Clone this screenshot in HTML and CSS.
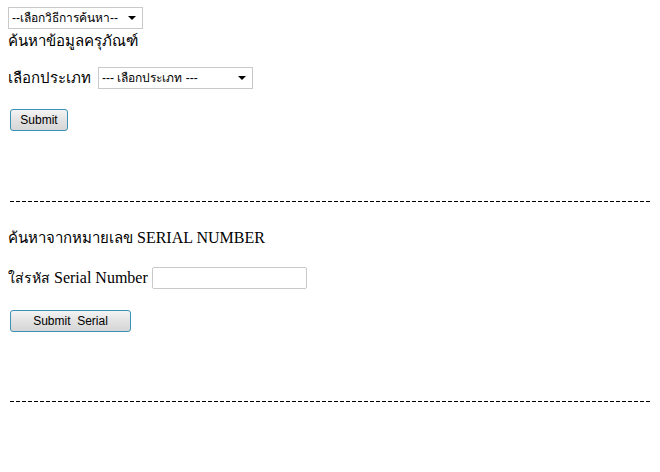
FILE: index.html
```html
<!DOCTYPE html>
<html>
<head>
    <meta charset="UTF-8">
    <title>ค้นหาข้อมูลครุภัณฑ์</title>
    <link rel="stylesheet" href="styles.css">
</head>
<body>
    <form class="search-type">
        <span class="pick">
            <select class="method">
                <option>--เลือกวิธีการค้นหา--</option>
            </select>
        </span>
    </form>
    <div class="section sans">
        <div class="title th">ค้นหาข้อมูลครุภัณฑ์</div>
        <div class="row">
            <label for="type" class="th">เลือกประเภท</label>
            <span class="pick">
                <select id="type" class="type">
                    <option>--- เลือกประเภท ---</option>
                </select>
            </span>
        </div>
        <button type="button" class="btn">Submit</button>
    </div>
    <div class="dash first"></div>
    <div class="section serif">
        <div class="title"><span class="th">ค้นหาจากหมายเลข</span> SERIAL NUMBER</div>
        <div class="row">
            <label for="serial"><span class="th small">ใส่รหัส</span> Serial Number</label>
            <input type="text" id="serial" class="serial">
        </div>
        <button type="button" class="btn wide">Submit &nbsp;Serial</button>
    </div>
    <div class="dash"></div>
</body>
</html>
```

FILE: styles.css
```css
body {
    margin: 7px 8px;
    background-color: #fff;
    color: #000;
    font-family: "Liberation Serif", serif;
    font-size: 16px;
}
select, input, button {
    font-family: "Liberation Sans", "DejaVu Sans", sans-serif;
    font-size: 12px;
    margin: 0;
    box-sizing: border-box;
}
/* select with the small black arrow */
.pick {
    position: relative;
    display: inline-block;
}
.pick::after {
    content: "";
    position: absolute;
    right: 7px;
    top: 9px;
    border-left: 4px solid transparent;
    border-right: 4px solid transparent;
    border-top: 4px solid #000;
    pointer-events: none;
}
select {
    appearance: none;
    -webkit-appearance: none;
    height: 22px;
    border: 1px solid #c9c9c9;
    border-radius: 0;
    background-color: #fff;
    color: #000;
    padding: 0 16px 0 3px;
}
.method {
    width: 135px;
    display: block;
}
.type {
    width: 155px;
    display: block;
}
.th {
    font-size: 15px;
}
.th.small {
    font-size: 14px;
}
.sans {
    font-family: "DejaVu Sans", "Noto Sans", sans-serif;
}
.serif {
    font-family: "Liberation Serif", serif;
}
.title {
    margin-top: 2px;
    line-height: 20px;
}
.serif .title {
    margin-top: 26px;
}
.row {
    display: flex;
    align-items: center;
    gap: 7px;
    margin-top: 16px;
    height: 22px;
}
.serif .row {
    margin-top: 19px;
    gap: 4px;
}
.serial {
    width: 155px;
    height: 22px;
    border: 1px solid #c9c9c9;
    border-radius: 2px;
}
.btn {
    display: block;
    margin: 20px 0 0 2px;
    height: 22px;
    width: 58px;
    padding: 0;
    border: 1px solid #3c8fb5;
    border-radius: 3px;
    background: linear-gradient(#f4f4f4, #e2e2e2 50%, #d6d6d6);
    color: #000;
}
.btn.wide {
    width: 121px;
    margin-top: 21px;
}
.dash {
    margin: 69px 0 0 2px;
    width: 640px;
    height: 1px;
    background-image: repeating-linear-gradient(90deg, #000 0 4px, transparent 4px 6px);
}
.dash.first {
    margin-top: 70px;
}
```
